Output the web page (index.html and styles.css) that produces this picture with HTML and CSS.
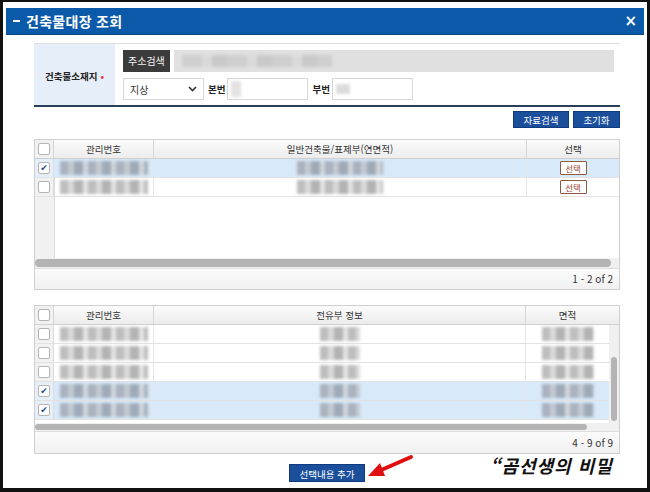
FILE: index.html
```html
<!DOCTYPE html>
<html lang="ko">
<head>
    <meta charset="UTF-8">
    <title>건축물대장 조회</title>
    <link rel="stylesheet" href="styles.css">
</head>
<body>

<div class="frame">
    <div class="titlebar">
        <span class="title"><b class="dash"></b>건축물대장 조회</span>
        <span class="close">×</span>
    </div>

    <div class="content">

        <div class="search-form">
            <div class="form-label">건축물소재지 <span class="req">•</span></div>
            <div class="form-fields">
                <div class="field-row">
                    <span class="btn-dark">주소검색</span>
                    <div class="addr-input"><span class="mosaic m-addr"></span></div>
                </div>
                <div class="field-row">
                    <div class="select">지상
                        <svg width="9" height="6" viewBox="0 0 9 6"><path d="M1 1l3.5 3.5L8 1" fill="none" stroke="#333" stroke-width="1.6"/></svg>
                    </div>
                    <span class="lbl">본번</span>
                    <div class="input"><span class="mosaic m-small"></span></div>
                    <span class="lbl">부번</span>
                    <div class="input"><span class="mosaic m-small2"></span></div>
                </div>
            </div>
        </div>

        <div class="actions">
            <span class="btn-blue">자료검색</span>
            <span class="btn-blue short">초기화</span>
        </div>

        <!-- 표제부 목록 -->
        <div class="grid grid-top">
            <div class="row head">
                <div class="cell cb"><i class="box"></i></div>
                <div class="cell">관리번호</div>
                <div class="cell">일반건축물/표제부(연면적)</div>
                <div class="cell last">선택</div>
            </div>
            <div class="grid-body">
                <div class="row sel">
                    <div class="cell cb"><i class="box on">✔</i></div>
                    <div class="cell"><span class="mosaic m-num"></span></div>
                    <div class="cell"><span class="mosaic m-main"></span></div>
                    <div class="cell last"><span class="btn-pick">선택</span></div>
                </div>
                <div class="row">
                    <div class="cell cb"><i class="box"></i></div>
                    <div class="cell"><span class="mosaic m-num light"></span></div>
                    <div class="cell"><span class="mosaic m-main light"></span></div>
                    <div class="cell last"><span class="btn-pick">선택</span></div>
                </div>
            </div>
            <div class="hscroll"><span class="thumb"></span></div>
            <div class="pager">1 - 2 of 2</div>
        </div>

        <!-- 전유부 목록 -->
        <div class="grid grid-bottom">
            <div class="row head">
                <div class="cell cb"><i class="box"></i></div>
                <div class="cell">관리번호</div>
                <div class="cell">전유부 정보</div>
                <div class="cell">면적</div>
                <div class="cell last"></div>
            </div>
            <div class="body-wrap">
                <div class="rows">
                    <div class="row">
                        <div class="cell cb"><i class="box"></i></div>
                        <div class="cell"><span class="mosaic m-num light"></span></div>
                        <div class="cell"><span class="mosaic m-info light"></span></div>
                        <div class="cell last"><span class="mosaic m-area light"></span></div>
                    </div>
                    <div class="row">
                        <div class="cell cb"><i class="box"></i></div>
                        <div class="cell"><span class="mosaic m-num light"></span></div>
                        <div class="cell"><span class="mosaic m-info light"></span></div>
                        <div class="cell last"><span class="mosaic m-area light"></span></div>
                    </div>
                    <div class="row">
                        <div class="cell cb"><i class="box"></i></div>
                        <div class="cell"><span class="mosaic m-num light"></span></div>
                        <div class="cell"><span class="mosaic m-info light"></span></div>
                        <div class="cell last"><span class="mosaic m-area light"></span></div>
                    </div>
                    <div class="row sel">
                        <div class="cell cb"><i class="box on">✔</i></div>
                        <div class="cell"><span class="mosaic m-num"></span></div>
                        <div class="cell"><span class="mosaic m-info"></span></div>
                        <div class="cell last"><span class="mosaic m-area"></span></div>
                    </div>
                    <div class="row sel">
                        <div class="cell cb"><i class="box on">✔</i></div>
                        <div class="cell"><span class="mosaic m-num"></span></div>
                        <div class="cell"><span class="mosaic m-info"></span></div>
                        <div class="cell last"><span class="mosaic m-area"></span></div>
                    </div>
                </div>
                <div class="vscroll"><span class="thumb"></span></div>
            </div>
            <div class="hscroll"><span class="thumb short"></span></div>
            <div class="pager">4 - 9 of 9</div>
        </div>

        <div class="bottom">
            <span class="btn-blue wide">선택내용 추가</span>
        </div>

    </div>

    <svg class="arrow" width="50" height="26" viewBox="0 0 50 26">
        <path d="M46 3 L14 17" stroke="#e01010" stroke-width="4" stroke-linecap="round"/>
        <path d="M3 22 L15 9 L20 22 Z" fill="#e01010"/>
    </svg>
    <div class="stamp">“곰선생의 비밀</div>
</div>

</body>
</html>
```

FILE: styles.css
```css
html,body{
    margin: 0;
    padding: 0;
}

body{
    font-family: "Noto Sans CJK KR", "Noto Sans", sans-serif;
    font-size: 10px;
    color: #333;
    background: #fff;
}

.frame{
    position: relative;
    width: 650px;
    height: 492px;
    box-sizing: border-box;
    border: 3px solid #111;
    border-top-width: 2px;
    border-bottom-width: 4px;
    padding: 6px 3px 0;
    overflow: hidden;
}

.titlebar{
    height: 27px;
    background: #0b5aa9;
    border-bottom: 1px solid #08437f;
    box-sizing: border-box;
    display: flex;
    align-items: center;
    justify-content: space-between;
    padding: 0 7px 0 7px;
    color: #fff;
}

.title{
    display: flex;
    align-items: center;
    font-size: 14px;
    font-weight: bold;
    letter-spacing: 0.3px;
}

.dash{
    display: inline-block;
    width: 7px;
    height: 2px;
    background: #fff;
    margin-right: 6px;
}

.close{
    font-size: 15px;
    font-weight: bold;
    font-family: "DejaVu Sans", sans-serif;
}

.content{
    padding: 0 24px 0 28px;
}

/* 검색 영역 */
.search-form{
    margin-top: 8px;
    display: flex;
    border-top: 1px solid #dedede;
    border-bottom: 2px solid #2a3e55;
    height: 61px;
}

.form-label{
    width: 81px;
    background: #e6eef9;
    display: flex;
    align-items: center;
    justify-content: center;
    font-weight: bold;
    font-size: 9.5px;
    color: #222;
    padding-top: 2px;
    box-sizing: border-box;
}

.req{
    color: #e03a3a;
    margin-left: 3px;
}

.form-fields{
    flex: 1;
    padding: 6px 6px 0 8px;
    display: flex;
    flex-direction: column;
    gap: 6px;
}

.field-row{
    display: flex;
    align-items: center;
    height: 22px;
}

.btn-dark{
    background: #3b3b3b;
    color: #f2f2f2;
    height: 22px;
    line-height: 22px;
    padding: 0 5px;
    font-size: 10px;
}

.addr-input{
    flex: 1;
    height: 22px;
    margin-left: 4px;
    background: #e0e0e0;
    display: flex;
    align-items: center;
    padding-left: 8px;
}

.select{
    width: 81px;
    height: 22px;
    box-sizing: border-box;
    border: 1px solid #d6d6d6;
    display: flex;
    align-items: center;
    justify-content: space-between;
    padding: 0 6px 0 6px;
    font-size: 10px;
    color: #333;
}

.lbl{
    font-weight: bold;
    font-size: 9.5px;
    color: #222;
    margin: 0 2px 0 4px;
}

.input{
    width: 81px;
    height: 22px;
    box-sizing: border-box;
    border: 1px solid #d6d6d6;
    display: flex;
    align-items: center;
    padding-left: 3px;
}

/* 모자이크 */
.mosaic{
    display: inline-block;
    height: 14px;
    filter: blur(1.4px);
    background: repeating-linear-gradient(90deg, #a9b2be 0 8px, #c2c9d2 8px 14px, #9eaab8 14px 23px, #d0d5dc 23px 28px);
}

.mosaic.light{
    background: repeating-linear-gradient(90deg, #bdbdbd 0 8px, #d9d9d9 8px 14px, #b3b3b3 14px 23px, #e3e3e3 23px 28px);
}

.m-addr{
    width: 150px;
    height: 12px;
    background: repeating-linear-gradient(90deg, #cfcfcf 0 20px, #dadada 20px 30px, #c9c9c9 30px 45px);
}

.m-small{
    width: 10px;
    height: 16px;
    background: #e2e2e2;
}

.m-small2{
    width: 14px;
    height: 10px;
    background: #dcdcdc;
}

.m-num{ width: 88px; }
.m-main{ width: 86px; }
.m-info{ width: 40px; }
.m-area{ width: 52px; }

/* 버튼 */
.actions{
    display: flex;
    justify-content: flex-end;
    gap: 4px;
    margin-top: 4px;
}

.btn-blue{
    display: inline-block;
    width: 56px;
    height: 17px;
    line-height: 17px;
    text-align: center;
    background: #1b4f9c;
    border: 1px solid #0e3c7e;
    box-sizing: border-box;
    color: #fff;
    font-size: 9.5px;
}

.btn-blue.short{ width: 47px; }
.btn-blue.wide{ width: 76px; height: 18px; line-height: 18px; }

/* 그리드 */
.grid{
    border: 1px solid #cfcfcf;
    background: #fff;
}

.grid-top{ margin-top: 11px; }
.grid-bottom{ margin-top: 15px; }

.row{
    display: grid;
    height: 19px;
    border-bottom: 1px solid #e2e2e2;
    box-sizing: border-box;
}

.grid-top .row{ grid-template-columns: 19px 100px 1fr 92px; }
.grid-bottom .row{ grid-template-columns: 19px 100px 1fr 83px; }
.grid-bottom .row.head{ grid-template-columns: 19px 100px 1fr 83px 10px; }

.cell{
    display: flex;
    align-items: center;
    justify-content: center;
    border-right: 1px solid #e6e6e6;
    overflow: hidden;
}

.cell.last{ border-right: 0; }

.row.head{
    background: linear-gradient(#fbfbfb, #ececec);
    border-bottom: 1px solid #cfcfcf;
    color: #333;
    font-size: 9.5px;
}

.row.head .cell{ border-right-color: #d6d6d6; }
.grid-bottom .row.head .cell:nth-child(4){ border-right: 0; }

.cell.cb{
    background: #f1f1f1;
    border-right-color: #dcdcdc;
}

.row.sel{ background: #d8e9fa; }
.row.sel .cell.cb{ background: #e6eef7; }

.box{
    display: block;
    width: 10px;
    height: 10px;
    border: 1px solid #b5b5b5;
    border-radius: 2px;
    background: #fff;
    font-style: normal;
    font-size: 9px;
    line-height: 10px;
    text-align: center;
    color: #1f4f8f;
    font-family: "DejaVu Sans", sans-serif;
}

.grid-body{
    height: 99px;
    background: linear-gradient(90deg, #f1f1f1 0 19px, #dcdcdc 19px 20px, #fff 20px);
}

.btn-pick{
    display: inline-block;
    width: 27px;
    height: 14px;
    line-height: 13px;
    text-align: center;
    border: 1.5px solid #8a5a44;
    border-radius: 1px;
    box-sizing: border-box;
    color: #a0453a;
    font-size: 8.5px;
    background: #fff;
}

.hscroll{
    height: 10px;
    background: #f0f0f0;
    padding: 1px 0;
    box-sizing: border-box;
    display: flex;
}

.hscroll .thumb{
    flex: 1;
    margin-right: 8px;
    background: #b4b4b4;
    border-radius: 5px;
}

.hscroll .thumb.short{
    flex: none;
    width: 552px;
}

.pager{
    height: 20px;
    line-height: 20px;
    text-align: right;
    padding-right: 6px;
    background: linear-gradient(#fbfbfb, #f1f1f1);
    border-top: 1px solid #dedede;
    font-size: 10px;
    color: #333;
}

.grid-bottom .hscroll{ height: 8px; }
.grid-bottom .pager{ height: 21px; line-height: 22px; }

.body-wrap{
    display: flex;
    height: 98px;
}

.rows{ flex: 1; }

.vscroll{
    width: 10px;
    background: #f0f0f0;
    display: flex;
    flex-direction: column;
    justify-content: flex-end;
    padding: 0 2px 2px;
    box-sizing: border-box;
}

.vscroll .thumb{
    height: 64px;
    background: #b4b4b4;
    border-radius: 3px;
}

.bottom{
    display: flex;
    justify-content: center;
    margin-top: 10px;
}

/* 덧그림 */
.arrow{
    position: absolute;
    left: 362px;
    top: 452px;
}

.stamp{
    position: absolute;
    left: 487px;
    top: 453px;
    font-size: 18px;
    line-height: 20px;
    font-weight: bold;
    font-style: italic;
    color: #111;
    letter-spacing: 1px;
    text-shadow: 1px 0 #fff, -1px 0 #fff, 0 1px #fff, 0 -1px #fff, 2px 2px #fff;
}
```
